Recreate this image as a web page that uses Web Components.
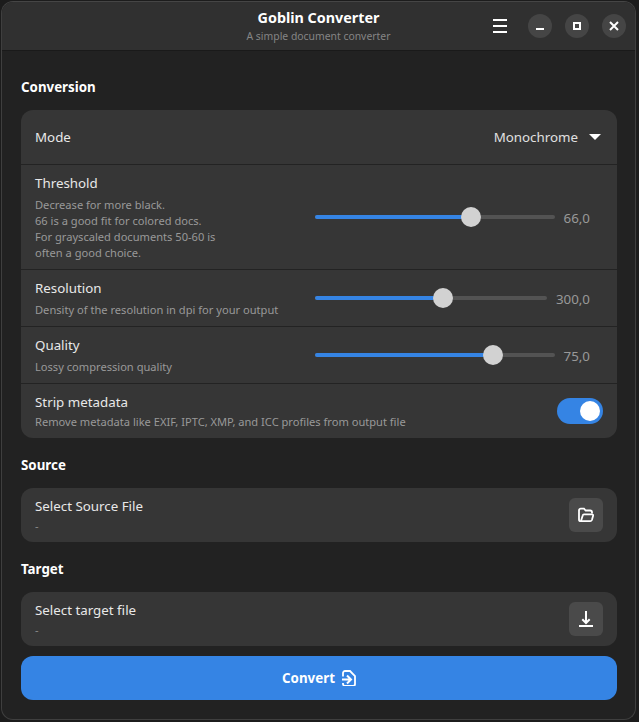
<!DOCTYPE html>
<html lang="en">
<head>
<meta charset="utf-8">
<title>Goblin Converter</title>
<style>
html, body { margin: 0; height: 100%; background: #1c1c1c; overflow: hidden; }
body { font-family: "Noto Sans", sans-serif; color: #fff; }
</style>
</head>
<body>
<gc-window>
    <gc-header slot="header" title="Goblin Converter" subtitle="A simple document converter"></gc-header>

    <gc-heading>Conversion</gc-heading>
    <gc-card>
        <gc-row label="Mode" height="54">
            <gc-dropdown>Monochrome</gc-dropdown>
        </gc-row>
        <gc-row label="Threshold" height="104" top>
            <span slot="desc">Decrease for more black.<br>66 is a good fit for colored docs.<br>For grayscaled documents 50-60 is<br>often a good choice.</span>
            <gc-slider value="65" track="240" text="66,0"></gc-slider>
        </gc-row>
        <gc-row label="Resolution" height="56" top>
            <span slot="desc">Density of the resolution in dpi for your output</span>
            <gc-slider value="55.2" track="232" text="300,0"></gc-slider>
        </gc-row>
        <gc-row label="Quality" height="56" top>
            <span slot="desc">Lossy compression quality</span>
            <gc-slider value="74.2" track="240" text="75,0"></gc-slider>
        </gc-row>
        <gc-row label="Strip metadata" height="54" top last tight>
            <span slot="desc">Remove metadata like EXIF, IPTC, XMP, and ICC profiles from output file</span>
            <gc-switch></gc-switch>
        </gc-row>
    </gc-card>

    <gc-heading>Source</gc-heading>
    <gc-card>
        <gc-row label="Select Source File" height="54" last file>
            <span slot="desc">-</span>
            <gc-icon-button icon="folder"></gc-icon-button>
        </gc-row>
    </gc-card>

    <gc-heading>Target</gc-heading>
    <gc-card>
        <gc-row label="Select target file" height="54" last file>
            <span slot="desc">-</span>
            <gc-icon-button icon="download"></gc-icon-button>
        </gc-row>
    </gc-card>

    <gc-convert>Convert</gc-convert>
</gc-window>

<script>
function shadow(el, html) {
    el.attachShadow({mode: 'open'}).innerHTML = html;
}

class GcWindow extends HTMLElement {
    constructor() {
        super();
        shadow(this, `
<style>
:host {
    display: flex;
    flex-direction: column;
    box-sizing: border-box;
    width: 635px;
    height: 719px;
    margin: 1px 0 0 1px;
    background: #222222;
    border: 1px solid #3f3f3f;
    border-top-color: #454545;
    border-radius: 12px;
    overflow: hidden;
}
main {
    display: flex;
    flex-direction: column;
    padding: 0 18px 0 19px;
}
</style>
<slot name="header"></slot>
<main><slot></slot></main>
`);
    }
}

class GcHeader extends HTMLElement {
    constructor() {
        super();
        const title = this.getAttribute('title');
        const subtitle = this.getAttribute('subtitle');
        this.removeAttribute('title');
        shadow(this, `
<style>
:host {
    display: grid;
    grid-template-columns: 1fr auto 1fr;
    align-items: center;
    box-sizing: border-box;
    height: 49px;
    flex: none;
    background: #303030;
    border-bottom: 1px solid #1a1a1a;
}
.titles { text-align: center; grid-column: 2; }
.title { font-size: 14.35px; font-weight: 700; line-height: 19px; color: #fff; }
.sub { font-size: 10.4px; line-height: 15px; margin-top: 2px; color: #858585; }
.controls {
    grid-column: 3;
    justify-self: end;
    display: flex;
    align-items: center;
    padding-right: 9px;
}
.menu { display: block; margin-right: 21px; }
.wb {
    display: flex;
    align-items: center;
    justify-content: center;
    width: 24px;
    height: 24px;
    border-radius: 50%;
    background: #454545;
    margin-left: 13px;
}
.menu + .wb { margin-left: 0; }
svg { display: block; }
</style>
<div class="titles">
    <div class="title">${title}</div>
    <div class="sub">${subtitle}</div>
</div>
<div class="controls">
    <svg class="menu" width="14" height="14" viewBox="0 0 14 14" fill="#fff">
        <rect y="0" width="14" height="2"/><rect y="6" width="14" height="2"/><rect y="12" width="14" height="2"/>
    </svg>
    <div class="wb"><svg width="8" height="8" viewBox="0 0 8 8" fill="#fff"><rect y="6" width="8" height="2"/></svg></div>
    <div class="wb"><svg width="8" height="8" viewBox="0 0 8 8" fill="none" stroke="#fff" stroke-width="2"><rect x="1" y="1" width="6" height="6"/></svg></div>
    <div class="wb"><svg width="10" height="10" viewBox="0 0 10 10" fill="none" stroke="#fff" stroke-width="2"><path d="M1 1l8 8M9 1l-8 8"/></svg></div>
</div>
`);
    }
}

class GcHeading extends HTMLElement {
    constructor() {
        super();
        shadow(this, `
<style>
:host {
    display: flex;
    align-items: center;
    height: 19px;
    font-size: 13.33px;
    font-weight: 700;
    color: #fff;
    margin: 17px 0 14px;
}
:host(:first-of-type) { margin-top: 26px; }
</style>
<slot></slot>
`);
    }
}

class GcCard extends HTMLElement {
    constructor() {
        super();
        shadow(this, `
<style>
:host {
    display: block;
    background: #363636;
    border-radius: 12px;
    overflow: hidden;
}
</style>
<slot></slot>
`);
    }
}

class GcRow extends HTMLElement {
    constructor() {
        super();
        const height = this.getAttribute('height');
        const label = this.getAttribute('label');
        shadow(this, `
<style>
:host {
    display: grid;
    grid-template-columns: 1fr auto;
    align-items: center;
    box-sizing: border-box;
    height: ${Number(height) + (this.hasAttribute('last') ? 0 : 1)}px;
    padding: 0 14px;
    border-bottom: 1px solid #232323;
}
:host([last]) { border-bottom: 0; }
:host([top]) .text, :host([file]) .text { align-self: start; padding-top: 9px; }
:host(:not([top]):not([file])) .desc { display: none; }
:host([file]) .desc { margin-top: 3px; color: #8a8a8a; }
:host([tight]) .desc { margin-top: 3px; }
.label { font-size: 13.33px; line-height: 18px; color: #e8e8e8; }
.desc { font-size: 11.11px; line-height: 16px; color: #999; margin-top: 5px; }
.text { min-width: 0; }
</style>
<div class="text">
    <div class="label">${label}</div>
    <div class="desc"><slot name="desc"></slot></div>
</div>
<slot></slot>
`);
    }
}

class GcDropdown extends HTMLElement {
    constructor() {
        super();
        shadow(this, `
<style>
:host {
    display: flex;
    align-items: center;
    font-size: 13.33px;
    color: #e0e0e0;
    gap: 11px;
    margin-right: 2px;
}
svg { display: block; margin-top: -1px; }
</style>
<slot></slot>
<svg width="12" height="6" viewBox="0 0 12 6" fill="#fff"><path d="M0 0h12L6 6z"/></svg>
`);
    }
}

class GcSlider extends HTMLElement {
    constructor() {
        super();
        const value = this.getAttribute('value');
        const track = this.getAttribute('track');
        shadow(this, `
<style>
:host {
    display: flex;
    align-items: center;
    width: 275px;
    margin-right: 13px;
    font-size: 13.33px;
    color: #999;
}
.track {
    position: relative;
    flex: none;
    width: ${track}px;
    height: 4px;
    border-radius: 2px;
    background: #535353;
}
.fill {
    height: 100%;
    width: ${value}%;
    border-radius: 2px;
    background: #3584e4;
}
.thumb {
    position: absolute;
    top: -8px;
    left: ${value}%;
    width: 20px;
    height: 20px;
    margin-left: -10px;
    border-radius: 50%;
    background: #d2d2d2;
}
.val { flex: 1; text-align: right; line-height: 18px; position: relative; top: 1px; }
</style>
<div class="track"><div class="fill"></div><div class="thumb"></div></div>
<div class="val">${this.getAttribute('text')}</div>
`);
    }
}

class GcSwitch extends HTMLElement {
    constructor() {
        super();
        shadow(this, `
<style>
:host {
    display: flex;
    justify-content: flex-end;
    align-items: center;
    box-sizing: border-box;
    width: 46px;
    height: 26px;
    padding: 3px;
    border-radius: 13px;
    background: #3584e4;
}
i { display: block; width: 20px; height: 20px; border-radius: 50%; background: #fff; }
</style>
<i></i>
`);
    }
}

class GcIconButton extends HTMLElement {
    constructor() {
        super();
        const icons = {
            folder: `<path d="M2.8 14.2C1.8 14.2 1 13.4 1 12.4V3.4C1 2.4 1.8 1.7 2.8 1.7H6l1.7 1.8h4.5c1 0 1.8.8 1.8 1.7v1.3" fill="none" stroke="#fff" stroke-width="1.8"/><path d="M2.9 14.2l1.9-6a1.2 1.2 0 0 1 1.1-.9H14c.8 0 1.3.7 1.1 1.4l-1.2 4.3c-.3.7-.9 1.2-1.7 1.2z" fill="none" stroke="#fff" stroke-width="1.8" stroke-linejoin="round"/>`,
            download: `<path d="M7 0v12M3.3 8.3L7 12l3.7-3.7" fill="none" stroke="#fff" stroke-width="2"/><rect y="14" width="14" height="2" x="0" fill="#fff"/>`
        };
        const box = this.getAttribute('icon') === 'folder' ? '0 0 16 16' : '0 0 14 16';
        const w = this.getAttribute('icon') === 'folder' ? 16 : 14;
        shadow(this, `
<style>
:host {
    display: flex;
    align-items: center;
    justify-content: center;
    width: 34px;
    height: 34px;
    border-radius: 6px;
    background: #4a4a4a;
}
svg { display: block; }
</style>
<svg width="${w}" height="16" viewBox="${box}">${icons[this.getAttribute('icon')]}</svg>
`);
    }
}

class GcConvert extends HTMLElement {
    constructor() {
        super();
        shadow(this, `
<style>
:host {
    display: flex;
    align-items: center;
    justify-content: center;
    gap: 6px;
    height: 44px;
    margin-top: 10px;
    border-radius: 12px;
    background: #3584e4;
    color: #fff;
    font-size: 13.33px;
    font-weight: 700;
}
svg { display: block; }
</style>
<slot></slot>
<svg width="15" height="16" viewBox="0 0 15 16" fill="none" stroke="#fff" stroke-width="1.8">
    <path d="M2 6.5V3a2 2 0 0 1 2-2h5l5 5v8a2 2 0 0 1-2 2H4a2 2 0 0 1-2-2v-1"/>
    <path d="M1 9.5h8M6 5.5l4 4-4 4" stroke-width="2"/>
</svg>
`);
    }
}

customElements.define('gc-window', GcWindow);
customElements.define('gc-header', GcHeader);
customElements.define('gc-heading', GcHeading);
customElements.define('gc-card', GcCard);
customElements.define('gc-row', GcRow);
customElements.define('gc-dropdown', GcDropdown);
customElements.define('gc-slider', GcSlider);
customElements.define('gc-switch', GcSwitch);
customElements.define('gc-icon-button', GcIconButton);
customElements.define('gc-convert', GcConvert);
</script>
</body>
</html>
